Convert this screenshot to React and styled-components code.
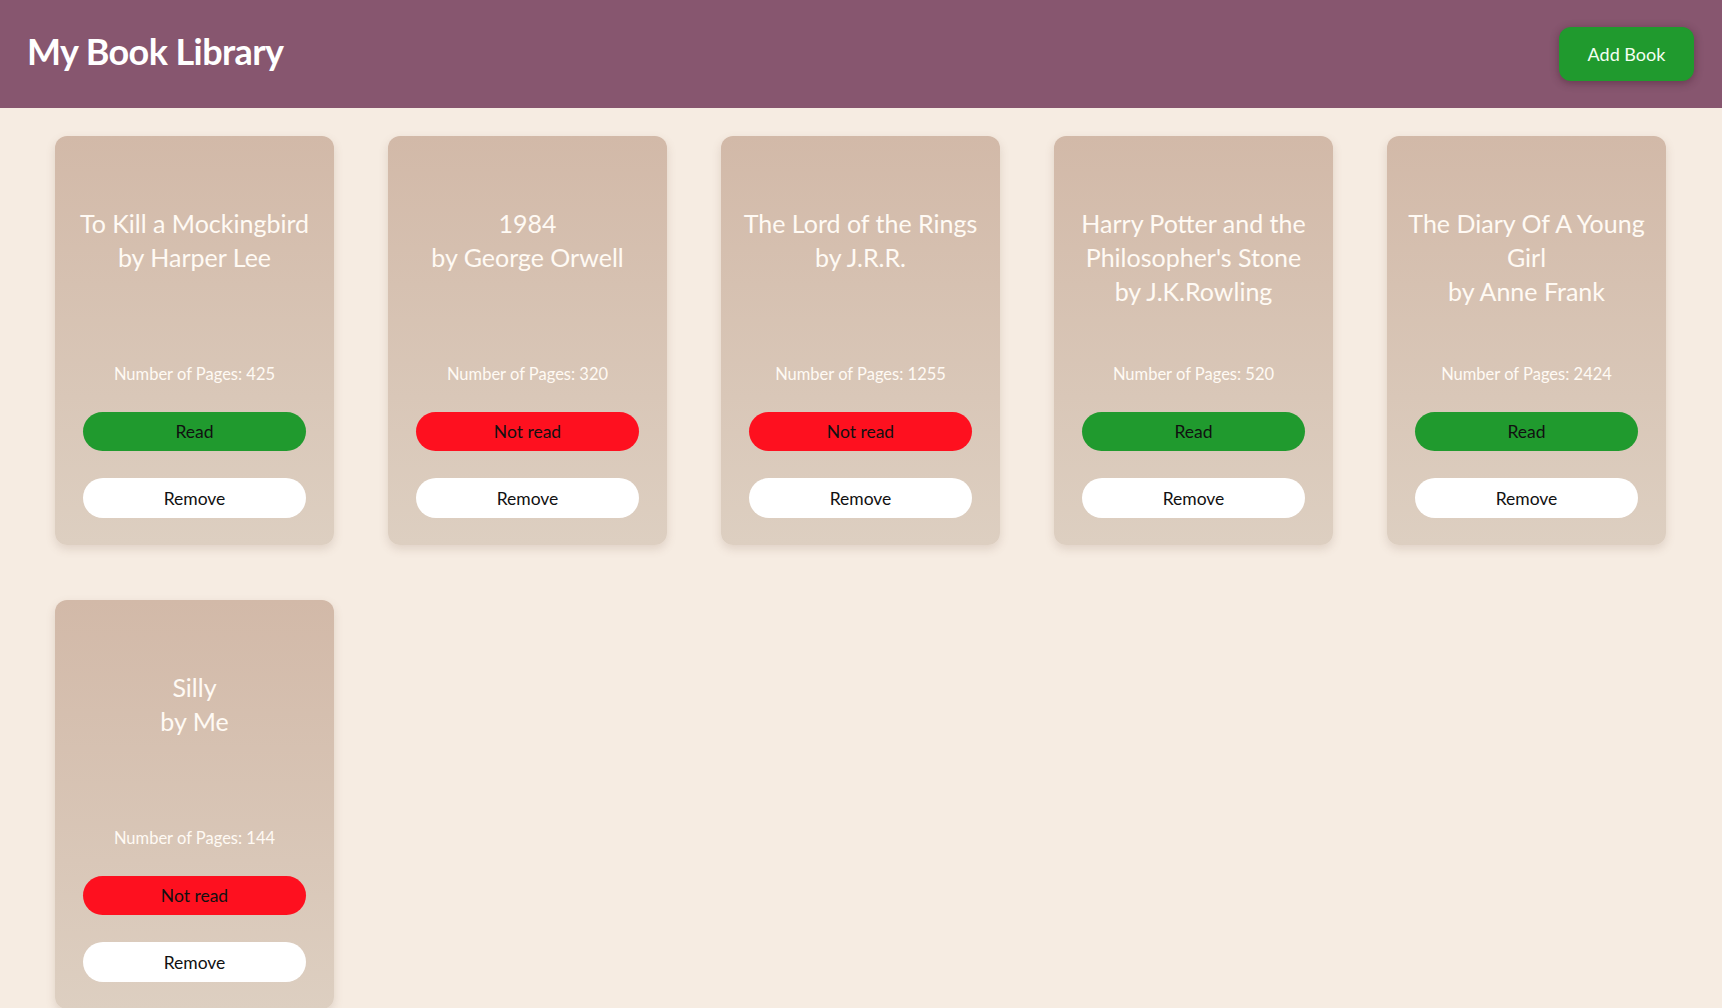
import React from 'react';
import styled, { createGlobalStyle } from 'styled-components';

const GlobalStyle = createGlobalStyle`
    * { box-sizing: border-box; }
    body {
        margin: 0;
        background: #f6ece2;
        font-family: Lato, "Noto Sans", sans-serif;
    }
`

const Header = styled.header`
    height: 108px;
    background: #87566f;
    display: flex;
    align-items: center;
    justify-content: space-between;
    padding: 0 28px 0 27px;
`

const Title = styled.h1`
    margin: 0 0 6px 0;
    color: #fff;
    font-size: 36px;
    font-weight: 700;
    letter-spacing: -0.6px;
`

const AddButton = styled.button`
    width: 135px;
    height: 54px;
    margin-bottom: 1px;
    border: none;
    border-radius: 12px;
    background: #209a2e;
    color: #f4fff2;
    font-family: inherit;
    font-size: 18px;
    box-shadow: 0 2px 8px rgba(60, 20, 40, 0.45);
`

const Grid = styled.main`
    display: grid;
    grid-template-columns: repeat(5, 279px);
    column-gap: 54px;
    row-gap: 55px;
    padding: 28px 55px 40px 55px;
`

const Card = styled.div`
    display: flex;
    flex-direction: column;
    align-items: stretch;
    padding: 0 28px 27px;
    border-radius: 12px;
    background: linear-gradient(180deg, #d2b9a8 0%, #ddcfc1 100%);
    box-shadow: 0 4px 10px rgba(120, 90, 70, 0.18);
    color: #fffaf4;
    text-align: center;
`

const BookTitle = styled.div`
    margin-top: 70px;
    height: 158px;
    margin-left: -14px;
    margin-right: -14px;
    font-size: 25px;
    line-height: 34px;
`

const Pages = styled.div`
    font-size: 16.5px;
    line-height: 20px;
    margin-bottom: 28px;
`

const Pill = styled.button`
    height: ${p => p.$h}px;
    border: none;
    border-radius: 20px;
    font-family: inherit;
    font-size: 17.5px;
    color: #111;
    background: ${p => p.$bg};
    margin-bottom: ${p => p.$mb || 0}px;
`

const books = [
    { title: 'To Kill a Mockingbird', author: 'Harper Lee', pages: 425, read: true },
    { title: '1984', author: 'George Orwell', pages: 320, read: false },
    { title: 'The Lord of the Rings', author: 'J.R.R.', pages: 1255, read: false },
    { title: "Harry Potter and the Philosopher's Stone", author: 'J.K.Rowling', pages: 520, read: true },
    { title: 'The Diary Of A Young Girl', author: 'Anne Frank', pages: 2424, read: true },
    { title: 'Silly', author: 'Me', pages: 144, read: false },
]

function BookCard({ book }) {
    return (
        <Card>
            <BookTitle>
                {book.title}
                <br />
                by {book.author}
            </BookTitle>
            <Pages>Number of Pages: {book.pages}</Pages>
            <Pill $h={39} $mb={27} $bg={book.read ? '#209a2e' : '#fe101f'}>
                {book.read ? 'Read' : 'Not read'}
            </Pill>
            <Pill $h={40} $bg="#ffffff">Remove</Pill>
        </Card>
    );
}

export default function App() {
    return (
        <>
            <GlobalStyle />
            <Header>
                <Title>My Book Library</Title>
                <AddButton>Add Book</AddButton>
            </Header>
            <Grid>
                {books.map(b => <BookCard key={b.title} book={b} />)}
            </Grid>
        </>
    );
}
